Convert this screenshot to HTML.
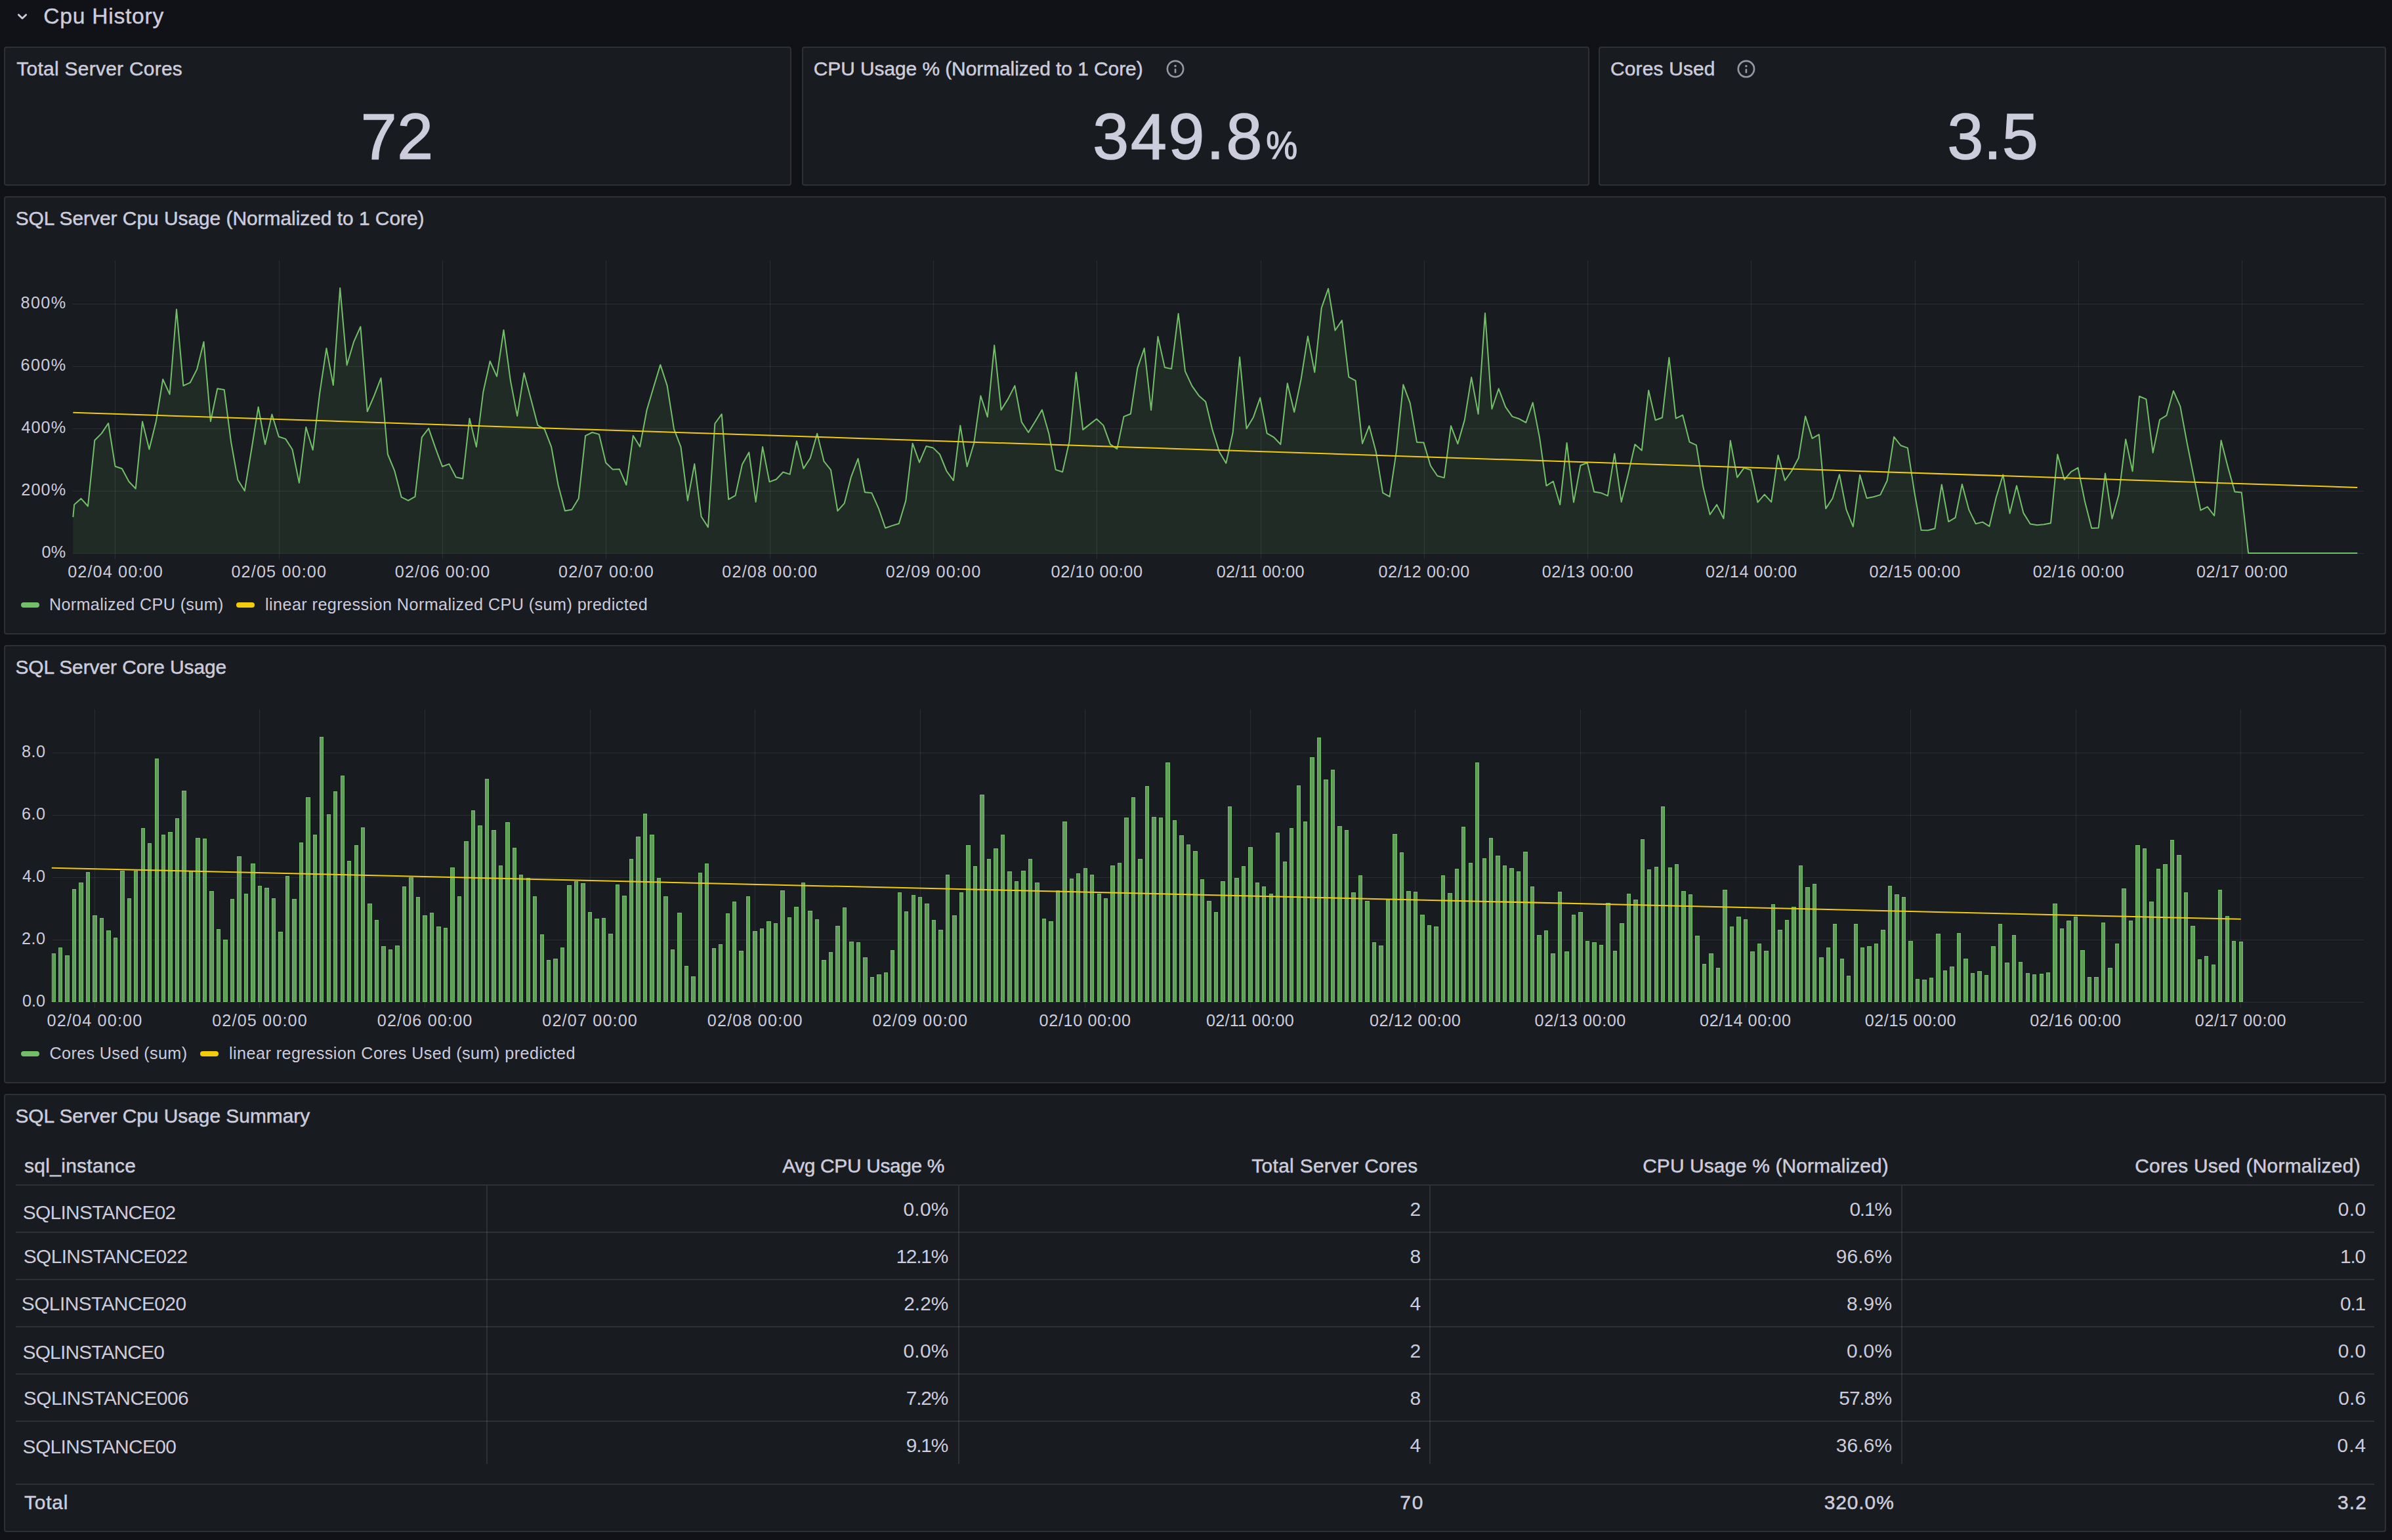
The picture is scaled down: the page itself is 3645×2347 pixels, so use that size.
<!DOCTYPE html>
<html lang="en"><head><meta charset="utf-8"><title>Cpu History</title>
<style>
html,body{margin:0;padding:0;background:#111217;}
body{width:3645px;height:2347px;position:relative;overflow:hidden;font-family:"Liberation Sans", sans-serif;color:#ccccdc;}
.panel{position:absolute;box-sizing:border-box;background:#181b1f;border:2px solid #2e3036;border-radius:4px;}
.t{position:absolute;white-space:pre;line-height:1;font-family:"Liberation Sans", sans-serif;color:#ccccdc;}
svg{position:absolute;left:0;top:0;}
.hl{position:absolute;background:rgba(204,204,220,0.12);}
.sw{position:absolute;width:28px;height:8px;border-radius:4px;}
</style></head><body>

<div class="panel" style="left:6px;top:71px;width:1200px;height:212px"></div>
<div class="panel" style="left:1222px;top:71px;width:1200px;height:212px"></div>
<div class="panel" style="left:2436px;top:71px;width:1200px;height:212px"></div>
<div class="panel" style="left:6px;top:299px;width:3630px;height:668px"></div>
<div class="panel" style="left:6px;top:983px;width:3630px;height:668px"></div>
<div class="panel" style="left:6px;top:1667px;width:3630px;height:668px"></div>
<svg width="3645" height="2347" viewBox="0 0 3645 2347" font-family='"Liberation Sans", sans-serif'>
<path d="M175.5 397V851.9 M425.5 397V851.9 M674.5 397V851.9 M923.5 397V851.9 M1173.5 397V851.9 M1422.5 397V851.9 M1671.5 397V851.9 M1921.5 397V851.9 M2170.5 397V851.9 M2419.5 397V851.9 M2668.5 397V851.9 M2918.5 397V851.9 M3167.5 397V851.9 M3416.5 397V851.9" stroke="#f0faff" stroke-opacity="0.085" stroke-width="1" fill="none" shape-rendering="crispEdges"/>
<path d="M111.3 843.5H3602.4 M111.3 748.5H3602.4 M111.3 653.5H3602.4 M111.3 558.5H3602.4 M111.3 463.5H3602.4" stroke="#f0faff" stroke-opacity="0.085" stroke-width="1" fill="none" shape-rendering="crispEdges"/>
<path d="M111.3 788.2 L113.2 768.9 L123.6 759.8 L134.0 771.5 L144.3 671.0 L154.7 660.6 L165.1 645.0 L175.5 710.7 L185.9 714.3 L196.3 733.8 L206.7 744.7 L217.0 642.4 L227.4 684.7 L237.8 642.3 L248.2 578.0 L258.6 600.9 L269.0 471.5 L279.4 587.9 L289.7 583.2 L300.1 562.9 L310.5 520.9 L320.9 642.2 L331.3 592.3 L341.7 593.9 L352.1 673.6 L362.4 731.2 L372.8 748.1 L383.2 685.5 L393.6 620.3 L404.0 677.2 L414.4 631.5 L424.8 665.5 L435.1 668.9 L445.5 685.0 L455.9 735.9 L466.3 651.0 L476.7 685.8 L487.1 599.8 L497.4 530.8 L507.8 587.1 L518.2 438.9 L528.6 556.5 L539.0 521.2 L549.4 497.8 L559.8 627.1 L570.1 603.2 L580.5 576.2 L590.9 692.5 L601.3 717.7 L611.7 757.7 L622.1 762.9 L632.5 756.9 L642.8 666.3 L653.2 652.8 L663.6 682.9 L674.0 711.0 L684.4 707.1 L694.8 727.3 L705.2 729.4 L715.5 637.7 L725.9 681.1 L736.3 597.5 L746.7 550.5 L757.1 573.6 L767.5 503.0 L777.9 580.1 L788.2 634.1 L798.6 568.4 L809.0 607.9 L819.4 648.1 L829.8 654.1 L840.2 681.1 L850.6 739.3 L860.9 778.5 L871.3 776.7 L881.7 759.8 L892.1 664.2 L902.5 659.0 L912.9 661.9 L923.2 705.3 L933.6 715.4 L944.0 715.1 L954.4 739.0 L964.8 664.0 L975.2 680.8 L985.6 625.0 L995.9 590.2 L1006.3 555.9 L1016.7 587.9 L1027.1 654.1 L1037.5 681.1 L1047.9 762.9 L1058.3 707.1 L1068.6 787.3 L1079.0 803.4 L1089.4 645.5 L1099.8 631.2 L1110.2 761.1 L1120.6 755.1 L1131.0 707.8 L1141.3 689.4 L1151.7 765.0 L1162.1 681.1 L1172.5 734.4 L1182.9 730.5 L1193.3 719.5 L1203.7 722.9 L1214.0 672.3 L1224.4 714.1 L1234.8 698.0 L1245.2 660.8 L1255.6 703.2 L1266.0 716.2 L1276.4 778.7 L1286.7 767.1 L1297.1 726.3 L1307.5 699.0 L1317.9 750.2 L1328.3 751.2 L1338.7 774.3 L1349.1 804.7 L1359.4 801.1 L1369.8 798.0 L1380.2 763.4 L1390.6 675.7 L1401.0 704.7 L1411.4 680.1 L1421.8 682.4 L1432.1 692.5 L1442.5 718.0 L1452.9 732.3 L1463.3 648.4 L1473.7 711.0 L1484.1 675.7 L1494.4 603.2 L1504.8 635.4 L1515.2 526.3 L1525.6 624.8 L1536.0 608.1 L1546.4 587.9 L1556.8 643.2 L1567.1 659.0 L1577.5 642.2 L1587.9 624.5 L1598.3 660.8 L1608.7 715.9 L1619.1 719.3 L1629.5 672.8 L1639.8 567.4 L1650.2 654.9 L1660.6 646.6 L1671.0 638.5 L1681.4 648.4 L1691.8 677.2 L1702.2 684.2 L1712.5 634.9 L1722.9 630.7 L1733.3 561.1 L1743.7 530.8 L1754.1 625.0 L1764.5 513.1 L1774.9 560.1 L1785.2 561.9 L1795.6 478.0 L1806.0 565.8 L1816.4 588.1 L1826.8 602.9 L1837.2 612.3 L1847.6 655.4 L1857.9 688.4 L1868.3 706.0 L1878.7 659.0 L1889.1 544.3 L1899.5 653.3 L1909.9 635.9 L1920.2 606.3 L1930.6 660.3 L1941.0 666.3 L1951.4 677.2 L1961.8 584.2 L1972.2 628.1 L1982.6 578.0 L1992.9 512.6 L2003.3 567.4 L2013.7 469.4 L2024.1 439.9 L2034.5 503.5 L2044.9 488.4 L2055.3 574.6 L2065.6 580.1 L2076.0 675.9 L2086.4 649.1 L2096.8 688.4 L2107.2 751.2 L2117.6 756.9 L2128.0 687.1 L2138.3 586.3 L2148.7 614.1 L2159.1 674.1 L2169.5 674.6 L2179.9 709.7 L2190.3 725.3 L2200.7 728.1 L2211.0 649.1 L2221.4 676.4 L2231.8 640.1 L2242.2 575.1 L2252.6 631.0 L2263.0 477.2 L2273.4 623.2 L2283.7 592.3 L2294.1 620.1 L2304.5 634.9 L2314.9 638.3 L2325.3 644.0 L2335.7 613.6 L2346.1 667.1 L2356.4 740.3 L2366.8 733.5 L2377.2 769.1 L2387.6 674.9 L2398.0 765.5 L2408.4 709.2 L2418.8 705.3 L2429.1 749.4 L2439.5 751.2 L2449.9 755.6 L2460.3 691.5 L2470.7 765.0 L2481.1 722.4 L2491.4 677.2 L2501.8 686.5 L2512.2 594.9 L2522.6 640.2 L2533.0 636.5 L2543.4 545.0 L2553.8 637.7 L2564.1 632.6 L2574.5 673.6 L2584.9 678.3 L2595.3 742.1 L2605.7 784.2 L2616.1 769.1 L2626.5 790.2 L2636.8 671.5 L2647.2 727.6 L2657.6 713.1 L2668.0 716.2 L2678.4 765.5 L2688.8 753.6 L2699.2 765.0 L2709.5 693.8 L2719.9 732.3 L2730.3 717.5 L2740.7 698.0 L2751.1 634.4 L2761.5 668.1 L2771.9 662.2 L2782.2 775.1 L2792.6 759.3 L2803.0 723.2 L2813.4 776.4 L2823.8 802.6 L2834.2 723.7 L2844.6 759.3 L2854.9 757.2 L2865.3 754.1 L2875.7 732.5 L2886.1 665.8 L2896.5 679.0 L2906.9 682.6 L2917.2 749.9 L2927.6 808.1 L2938.0 808.3 L2948.4 805.5 L2958.8 738.5 L2969.2 795.1 L2979.6 788.9 L2989.9 738.0 L3000.3 776.9 L3010.7 798.2 L3021.1 795.6 L3031.5 802.1 L3041.9 757.7 L3052.3 723.4 L3062.6 782.4 L3073.0 740.3 L3083.4 781.9 L3093.8 798.5 L3104.2 800.3 L3114.6 799.3 L3125.0 797.2 L3135.3 692.5 L3145.7 731.0 L3156.1 718.8 L3166.5 712.8 L3176.9 764.0 L3187.3 805.0 L3197.7 804.5 L3208.0 721.4 L3218.4 790.4 L3228.8 753.6 L3239.2 669.4 L3249.6 718.2 L3260.0 604.0 L3270.4 608.4 L3280.7 689.9 L3291.1 639.5 L3301.5 633.1 L3311.9 595.7 L3322.3 619.1 L3332.7 675.1 L3343.1 727.1 L3353.4 777.7 L3363.8 772.3 L3374.2 786.0 L3384.6 671.2 L3395.0 712.0 L3405.4 749.4 L3415.8 750.5 L3426.1 842.9 L3436.5 842.9 L3446.9 842.9 L3457.3 842.9 L3467.7 842.9 L3478.1 842.9 L3488.4 842.9 L3498.8 842.9 L3509.2 842.9 L3519.6 842.9 L3530.0 842.9 L3540.4 842.9 L3550.8 842.9 L3561.1 842.9 L3571.5 842.9 L3581.9 842.9 L3592.3 842.9 L3592.3 843.4 L111.3 843.4 Z" fill="#73BF69" fill-opacity="0.1" stroke="none"/>
<path d="M111.3 788.2 L113.2 768.9 L123.6 759.8 L134.0 771.5 L144.3 671.0 L154.7 660.6 L165.1 645.0 L175.5 710.7 L185.9 714.3 L196.3 733.8 L206.7 744.7 L217.0 642.4 L227.4 684.7 L237.8 642.3 L248.2 578.0 L258.6 600.9 L269.0 471.5 L279.4 587.9 L289.7 583.2 L300.1 562.9 L310.5 520.9 L320.9 642.2 L331.3 592.3 L341.7 593.9 L352.1 673.6 L362.4 731.2 L372.8 748.1 L383.2 685.5 L393.6 620.3 L404.0 677.2 L414.4 631.5 L424.8 665.5 L435.1 668.9 L445.5 685.0 L455.9 735.9 L466.3 651.0 L476.7 685.8 L487.1 599.8 L497.4 530.8 L507.8 587.1 L518.2 438.9 L528.6 556.5 L539.0 521.2 L549.4 497.8 L559.8 627.1 L570.1 603.2 L580.5 576.2 L590.9 692.5 L601.3 717.7 L611.7 757.7 L622.1 762.9 L632.5 756.9 L642.8 666.3 L653.2 652.8 L663.6 682.9 L674.0 711.0 L684.4 707.1 L694.8 727.3 L705.2 729.4 L715.5 637.7 L725.9 681.1 L736.3 597.5 L746.7 550.5 L757.1 573.6 L767.5 503.0 L777.9 580.1 L788.2 634.1 L798.6 568.4 L809.0 607.9 L819.4 648.1 L829.8 654.1 L840.2 681.1 L850.6 739.3 L860.9 778.5 L871.3 776.7 L881.7 759.8 L892.1 664.2 L902.5 659.0 L912.9 661.9 L923.2 705.3 L933.6 715.4 L944.0 715.1 L954.4 739.0 L964.8 664.0 L975.2 680.8 L985.6 625.0 L995.9 590.2 L1006.3 555.9 L1016.7 587.9 L1027.1 654.1 L1037.5 681.1 L1047.9 762.9 L1058.3 707.1 L1068.6 787.3 L1079.0 803.4 L1089.4 645.5 L1099.8 631.2 L1110.2 761.1 L1120.6 755.1 L1131.0 707.8 L1141.3 689.4 L1151.7 765.0 L1162.1 681.1 L1172.5 734.4 L1182.9 730.5 L1193.3 719.5 L1203.7 722.9 L1214.0 672.3 L1224.4 714.1 L1234.8 698.0 L1245.2 660.8 L1255.6 703.2 L1266.0 716.2 L1276.4 778.7 L1286.7 767.1 L1297.1 726.3 L1307.5 699.0 L1317.9 750.2 L1328.3 751.2 L1338.7 774.3 L1349.1 804.7 L1359.4 801.1 L1369.8 798.0 L1380.2 763.4 L1390.6 675.7 L1401.0 704.7 L1411.4 680.1 L1421.8 682.4 L1432.1 692.5 L1442.5 718.0 L1452.9 732.3 L1463.3 648.4 L1473.7 711.0 L1484.1 675.7 L1494.4 603.2 L1504.8 635.4 L1515.2 526.3 L1525.6 624.8 L1536.0 608.1 L1546.4 587.9 L1556.8 643.2 L1567.1 659.0 L1577.5 642.2 L1587.9 624.5 L1598.3 660.8 L1608.7 715.9 L1619.1 719.3 L1629.5 672.8 L1639.8 567.4 L1650.2 654.9 L1660.6 646.6 L1671.0 638.5 L1681.4 648.4 L1691.8 677.2 L1702.2 684.2 L1712.5 634.9 L1722.9 630.7 L1733.3 561.1 L1743.7 530.8 L1754.1 625.0 L1764.5 513.1 L1774.9 560.1 L1785.2 561.9 L1795.6 478.0 L1806.0 565.8 L1816.4 588.1 L1826.8 602.9 L1837.2 612.3 L1847.6 655.4 L1857.9 688.4 L1868.3 706.0 L1878.7 659.0 L1889.1 544.3 L1899.5 653.3 L1909.9 635.9 L1920.2 606.3 L1930.6 660.3 L1941.0 666.3 L1951.4 677.2 L1961.8 584.2 L1972.2 628.1 L1982.6 578.0 L1992.9 512.6 L2003.3 567.4 L2013.7 469.4 L2024.1 439.9 L2034.5 503.5 L2044.9 488.4 L2055.3 574.6 L2065.6 580.1 L2076.0 675.9 L2086.4 649.1 L2096.8 688.4 L2107.2 751.2 L2117.6 756.9 L2128.0 687.1 L2138.3 586.3 L2148.7 614.1 L2159.1 674.1 L2169.5 674.6 L2179.9 709.7 L2190.3 725.3 L2200.7 728.1 L2211.0 649.1 L2221.4 676.4 L2231.8 640.1 L2242.2 575.1 L2252.6 631.0 L2263.0 477.2 L2273.4 623.2 L2283.7 592.3 L2294.1 620.1 L2304.5 634.9 L2314.9 638.3 L2325.3 644.0 L2335.7 613.6 L2346.1 667.1 L2356.4 740.3 L2366.8 733.5 L2377.2 769.1 L2387.6 674.9 L2398.0 765.5 L2408.4 709.2 L2418.8 705.3 L2429.1 749.4 L2439.5 751.2 L2449.9 755.6 L2460.3 691.5 L2470.7 765.0 L2481.1 722.4 L2491.4 677.2 L2501.8 686.5 L2512.2 594.9 L2522.6 640.2 L2533.0 636.5 L2543.4 545.0 L2553.8 637.7 L2564.1 632.6 L2574.5 673.6 L2584.9 678.3 L2595.3 742.1 L2605.7 784.2 L2616.1 769.1 L2626.5 790.2 L2636.8 671.5 L2647.2 727.6 L2657.6 713.1 L2668.0 716.2 L2678.4 765.5 L2688.8 753.6 L2699.2 765.0 L2709.5 693.8 L2719.9 732.3 L2730.3 717.5 L2740.7 698.0 L2751.1 634.4 L2761.5 668.1 L2771.9 662.2 L2782.2 775.1 L2792.6 759.3 L2803.0 723.2 L2813.4 776.4 L2823.8 802.6 L2834.2 723.7 L2844.6 759.3 L2854.9 757.2 L2865.3 754.1 L2875.7 732.5 L2886.1 665.8 L2896.5 679.0 L2906.9 682.6 L2917.2 749.9 L2927.6 808.1 L2938.0 808.3 L2948.4 805.5 L2958.8 738.5 L2969.2 795.1 L2979.6 788.9 L2989.9 738.0 L3000.3 776.9 L3010.7 798.2 L3021.1 795.6 L3031.5 802.1 L3041.9 757.7 L3052.3 723.4 L3062.6 782.4 L3073.0 740.3 L3083.4 781.9 L3093.8 798.5 L3104.2 800.3 L3114.6 799.3 L3125.0 797.2 L3135.3 692.5 L3145.7 731.0 L3156.1 718.8 L3166.5 712.8 L3176.9 764.0 L3187.3 805.0 L3197.7 804.5 L3208.0 721.4 L3218.4 790.4 L3228.8 753.6 L3239.2 669.4 L3249.6 718.2 L3260.0 604.0 L3270.4 608.4 L3280.7 689.9 L3291.1 639.5 L3301.5 633.1 L3311.9 595.7 L3322.3 619.1 L3332.7 675.1 L3343.1 727.1 L3353.4 777.7 L3363.8 772.3 L3374.2 786.0 L3384.6 671.2 L3395.0 712.0 L3405.4 749.4 L3415.8 750.5 L3426.1 842.9 L3436.5 842.9 L3446.9 842.9 L3457.3 842.9 L3467.7 842.9 L3478.1 842.9 L3488.4 842.9 L3498.8 842.9 L3509.2 842.9 L3519.6 842.9 L3530.0 842.9 L3540.4 842.9 L3550.8 842.9 L3561.1 842.9 L3571.5 842.9 L3581.9 842.9 L3592.3 842.9" fill="none" stroke="#73BF69" stroke-width="2" stroke-linejoin="round"/>
<path d="M111.3 628.8 L3592.3 742.9" stroke="#F2CC0C" stroke-width="2" fill="none"/>
<path d="M144.5 1081V1535.7 M395.5 1081V1535.7 M647.5 1081V1535.7 M899.5 1081V1535.7 M1150.5 1081V1535.7 M1402.5 1081V1535.7 M1653.5 1081V1535.7 M1905.5 1081V1535.7 M2156.5 1081V1535.7 M2408.5 1081V1535.7 M2660.5 1081V1535.7 M2911.5 1081V1535.7 M3163.5 1081V1535.7 M3414.5 1081V1535.7" stroke="#f0faff" stroke-opacity="0.085" stroke-width="1" fill="none" shape-rendering="crispEdges"/>
<path d="M80 1527.5H3602.4 M80 1432.5H3602.4 M80 1337.5H3602.4 M80 1242.5H3602.4 M80 1147.5H3602.4" stroke="#f0faff" stroke-opacity="0.085" stroke-width="1" fill="none" shape-rendering="crispEdges"/>
<clipPath id="cp2"><rect x="78.8" y="1081" width="3523.6" height="446.20000000000005"/></clipPath>
<g clip-path="url(#cp2)" shape-rendering="crispEdges"><path d="M78 1453H85V1527H78zM89 1444H95V1527H89zM99 1456H106V1527H99zM110 1355H116V1527H110zM120 1345H127V1527H120zM131 1329H137V1527H131zM141 1395H148V1527H141zM152 1399H158V1527H152zM162 1418H169V1527H162zM173 1429H179V1527H173zM183 1327H190V1527H183zM194 1369H200V1527H194zM204 1327H210V1527H204zM215 1262H221V1527H215zM225 1285H231V1527H225zM236 1156H242V1527H236zM246 1272H252V1527H246zM256 1268H263V1527H256zM267 1247H273V1527H267zM277 1205H284V1527H277zM288 1327H294V1527H288zM298 1277H305V1527H298zM309 1278H315V1527H309zM319 1358H326V1527H319zM330 1416H336V1527H330zM340 1432H347V1527H340zM351 1370H357V1527H351zM361 1305H368V1527H361zM372 1362H378V1527H372zM382 1316H389V1527H382zM393 1350H399V1527H393zM403 1353H410V1527H403zM414 1369H420V1527H414zM424 1420H431V1527H424zM435 1335H441V1527H435zM445 1370H452V1527H445zM456 1284H462V1527H456zM466 1215H473V1527H466zM477 1272H483V1527H477zM487 1123H493V1527H487zM498 1241H504V1527H498zM508 1206H514V1527H508zM519 1182H525V1527H519zM529 1312H535V1527H529zM540 1288H546V1527H540zM550 1261H556V1527H550zM560 1377H567V1527H560zM571 1402H577V1527H571zM581 1442H588V1527H581zM592 1447H598V1527H592zM602 1441H609V1527H602zM613 1351H619V1527H613zM623 1337H630V1527H623zM634 1367H640V1527H634zM644 1395H651V1527H644zM655 1391H661V1527H655zM665 1412H672V1527H665zM676 1414H682V1527H676zM686 1322H693V1527H686zM697 1366H703V1527H697zM707 1282H714V1527H707zM718 1235H724V1527H718zM728 1258H735V1527H728zM739 1187H745V1527H739zM749 1265H756V1527H749zM760 1319H766V1527H760zM770 1253H777V1527H770zM781 1292H787V1527H781zM791 1333H797V1527H791zM802 1338H808V1527H802zM812 1366H818V1527H812zM823 1424H829V1527H823zM833 1463H839V1527H833zM843 1461H850V1527H843zM854 1444H860V1527H854zM864 1349H871V1527H864zM875 1343H881V1527H875zM885 1346H892V1527H885zM896 1390H902V1527H896zM906 1400H913V1527H906zM917 1399H923V1527H917zM927 1423H934V1527H927zM938 1348H944V1527H938zM948 1365H955V1527H948zM959 1309H965V1527H959zM969 1275H976V1527H969zM980 1240H986V1527H980zM990 1272H997V1527H990zM1001 1338H1007V1527H1001zM1011 1366H1018V1527H1011zM1022 1447H1028V1527H1022zM1032 1391H1039V1527H1032zM1043 1472H1049V1527H1043zM1053 1488H1060V1527H1053zM1064 1330H1070V1527H1064zM1074 1316H1080V1527H1074zM1085 1445H1091V1527H1085zM1095 1439H1101V1527H1095zM1106 1392H1112V1527H1106zM1116 1374H1122V1527H1116zM1126 1449H1133V1527H1126zM1137 1366H1143V1527H1137zM1147 1419H1154V1527H1147zM1158 1415H1164V1527H1158zM1168 1404H1175V1527H1168zM1179 1407H1185V1527H1179zM1189 1357H1196V1527H1189zM1200 1398H1206V1527H1200zM1210 1382H1217V1527H1210zM1221 1345H1227V1527H1221zM1231 1388H1238V1527H1231zM1242 1401H1248V1527H1242zM1252 1463H1259V1527H1252zM1263 1451H1269V1527H1263zM1273 1411H1280V1527H1273zM1284 1383H1290V1527H1284zM1294 1435H1301V1527H1294zM1305 1436H1311V1527H1305zM1315 1459H1322V1527H1315zM1326 1489H1332V1527H1326zM1336 1485H1343V1527H1336zM1347 1482H1353V1527H1347zM1357 1448H1363V1527H1357zM1368 1360H1374V1527H1368zM1378 1389H1384V1527H1378zM1389 1364H1395V1527H1389zM1399 1367H1405V1527H1399zM1409 1377H1416V1527H1409zM1420 1402H1426V1527H1420zM1430 1417H1437V1527H1430zM1441 1333H1447V1527H1441zM1451 1395H1458V1527H1451zM1462 1360H1468V1527H1462zM1472 1288H1479V1527H1472zM1483 1320H1489V1527H1483zM1493 1211H1500V1527H1493zM1504 1309H1510V1527H1504zM1514 1293H1521V1527H1514zM1525 1272H1531V1527H1525zM1535 1328H1542V1527H1535zM1546 1343H1552V1527H1546zM1556 1327H1563V1527H1556zM1567 1309H1573V1527H1567zM1577 1345H1584V1527H1577zM1588 1400H1594V1527H1588zM1598 1404H1605V1527H1598zM1609 1357H1615V1527H1609zM1619 1252H1626V1527H1619zM1630 1339H1636V1527H1630zM1640 1331H1646V1527H1640zM1651 1323H1657V1527H1651zM1661 1333H1667V1527H1661zM1672 1362H1678V1527H1672zM1682 1369H1688V1527H1682zM1692 1319H1699V1527H1692zM1703 1315H1709V1527H1703zM1713 1246H1720V1527H1713zM1724 1215H1730V1527H1724zM1734 1309H1741V1527H1734zM1745 1198H1751V1527H1745zM1755 1245H1762V1527H1755zM1766 1246H1772V1527H1766zM1776 1162H1783V1527H1776zM1787 1250H1793V1527H1787zM1797 1273H1804V1527H1797zM1808 1287H1814V1527H1808zM1818 1297H1825V1527H1818zM1829 1340H1835V1527H1829zM1839 1373H1846V1527H1839zM1850 1390H1856V1527H1850zM1860 1343H1867V1527H1860zM1871 1229H1877V1527H1871zM1881 1338H1888V1527H1881zM1892 1320H1898V1527H1892zM1902 1291H1909V1527H1902zM1913 1345H1919V1527H1913zM1923 1351H1929V1527H1923zM1934 1362H1940V1527H1934zM1944 1269H1950V1527H1944zM1955 1313H1961V1527H1955zM1965 1262H1971V1527H1965zM1976 1197H1982V1527H1976zM1986 1252H1992V1527H1986zM1996 1154H2003V1527H1996zM2007 1124H2013V1527H2007zM2017 1188H2024V1527H2017zM2028 1173H2034V1527H2028zM2038 1259H2045V1527H2038zM2049 1265H2055V1527H2049zM2059 1360H2066V1527H2059zM2070 1334H2076V1527H2070zM2080 1373H2087V1527H2080zM2091 1436H2097V1527H2091zM2101 1441H2108V1527H2101zM2112 1371H2118V1527H2112zM2122 1271H2129V1527H2122zM2133 1299H2139V1527H2133zM2143 1358H2150V1527H2143zM2154 1359H2160V1527H2154zM2164 1394H2171V1527H2164zM2175 1410H2181V1527H2175zM2185 1412H2192V1527H2185zM2196 1334H2202V1527H2196zM2206 1361H2213V1527H2206zM2217 1324H2223V1527H2217zM2227 1260H2233V1527H2227zM2238 1315H2244V1527H2238zM2248 1162H2254V1527H2248zM2259 1308H2265V1527H2259zM2269 1277H2275V1527H2269zM2279 1304H2286V1527H2279zM2290 1319H2296V1527H2290zM2300 1323H2307V1527H2300zM2311 1328H2317V1527H2311zM2321 1298H2328V1527H2321zM2332 1351H2338V1527H2332zM2342 1425H2349V1527H2342zM2353 1418H2359V1527H2353zM2363 1453H2370V1527H2363zM2374 1359H2380V1527H2374zM2384 1450H2391V1527H2384zM2395 1394H2401V1527H2395zM2405 1390H2412V1527H2405zM2416 1434H2422V1527H2416zM2426 1436H2433V1527H2426zM2437 1440H2443V1527H2437zM2447 1376H2454V1527H2447zM2458 1449H2464V1527H2458zM2468 1407H2475V1527H2468zM2479 1362H2485V1527H2479zM2489 1371H2496V1527H2489zM2500 1279H2506V1527H2500zM2510 1325H2516V1527H2510zM2521 1321H2527V1527H2521zM2531 1229H2537V1527H2531zM2542 1322H2548V1527H2542zM2552 1317H2558V1527H2552zM2562 1358H2569V1527H2562zM2573 1363H2579V1527H2573zM2583 1426H2590V1527H2583zM2594 1469H2600V1527H2594zM2604 1453H2611V1527H2604zM2615 1475H2621V1527H2615zM2625 1356H2632V1527H2625zM2636 1412H2642V1527H2636zM2646 1397H2653V1527H2646zM2657 1401H2663V1527H2657zM2667 1450H2674V1527H2667zM2678 1438H2684V1527H2678zM2688 1449H2695V1527H2688zM2699 1378H2705V1527H2699zM2709 1417H2716V1527H2709zM2720 1402H2726V1527H2720zM2730 1382H2737V1527H2730zM2741 1319H2747V1527H2741zM2751 1352H2758V1527H2751zM2762 1347H2768V1527H2762zM2772 1459H2779V1527H2772zM2783 1444H2789V1527H2783zM2793 1408H2799V1527H2793zM2804 1461H2810V1527H2804zM2814 1487H2820V1527H2814zM2825 1408H2831V1527H2825zM2835 1444H2841V1527H2835zM2845 1442H2852V1527H2845zM2856 1438H2862V1527H2856zM2866 1417H2873V1527H2866zM2877 1350H2883V1527H2877zM2887 1363H2894V1527H2887zM2898 1367H2904V1527H2898zM2908 1434H2915V1527H2908zM2919 1492H2925V1527H2919zM2929 1493H2936V1527H2929zM2940 1490H2946V1527H2940zM2950 1423H2957V1527H2950zM2961 1479H2967V1527H2961zM2971 1473H2978V1527H2971zM2982 1422H2988V1527H2982zM2992 1461H2999V1527H2992zM3003 1483H3009V1527H3003zM3013 1480H3020V1527H3013zM3024 1486H3030V1527H3024zM3034 1442H3041V1527H3034zM3045 1408H3051V1527H3045zM3055 1467H3062V1527H3055zM3066 1425H3072V1527H3066zM3076 1466H3082V1527H3076zM3087 1483H3093V1527H3087zM3097 1485H3103V1527H3097zM3108 1484H3114V1527H3108zM3118 1482H3124V1527H3118zM3128 1377H3135V1527H3128zM3139 1415H3145V1527H3139zM3149 1403H3156V1527H3149zM3160 1397H3166V1527H3160zM3170 1448H3177V1527H3170zM3181 1489H3187V1527H3181zM3191 1489H3198V1527H3191zM3202 1406H3208V1527H3202zM3212 1475H3219V1527H3212zM3223 1438H3229V1527H3223zM3233 1354H3240V1527H3233zM3244 1403H3250V1527H3244zM3254 1288H3261V1527H3254zM3265 1293H3271V1527H3265zM3275 1374H3282V1527H3275zM3286 1324H3292V1527H3286zM3296 1317H3303V1527H3296zM3307 1280H3313V1527H3307zM3317 1303H3324V1527H3317zM3328 1360H3334V1527H3328zM3338 1411H3345V1527H3338zM3349 1462H3355V1527H3349zM3359 1457H3365V1527H3359zM3370 1470H3376V1527H3370zM3380 1356H3386V1527H3380zM3391 1396H3397V1527H3391zM3401 1434H3407V1527H3401zM3412 1435H3418V1527H3412z" fill="#73BF69"/><path d="M79 1454H84V1526H79zM90 1445H94V1526H90zM100 1457H105V1526H100zM111 1356H115V1526H111zM121 1346H126V1526H121zM132 1330H136V1526H132zM142 1396H147V1526H142zM153 1400H157V1526H153zM163 1419H168V1526H163zM174 1430H178V1526H174zM184 1328H189V1526H184zM195 1370H199V1526H195zM205 1328H209V1526H205zM216 1263H220V1526H216zM226 1286H230V1526H226zM237 1157H241V1526H237zM247 1273H251V1526H247zM257 1269H262V1526H257zM268 1248H272V1526H268zM278 1206H283V1526H278zM289 1328H293V1526H289zM299 1278H304V1526H299zM310 1279H314V1526H310zM320 1359H325V1526H320zM331 1417H335V1526H331zM341 1433H346V1526H341zM352 1371H356V1526H352zM362 1306H367V1526H362zM373 1363H377V1526H373zM383 1317H388V1526H383zM394 1351H398V1526H394zM404 1354H409V1526H404zM415 1370H419V1526H415zM425 1421H430V1526H425zM436 1336H440V1526H436zM446 1371H451V1526H446zM457 1285H461V1526H457zM467 1216H472V1526H467zM478 1273H482V1526H478zM488 1124H492V1526H488zM499 1242H503V1526H499zM509 1207H513V1526H509zM520 1183H524V1526H520zM530 1313H534V1526H530zM541 1289H545V1526H541zM551 1262H555V1526H551zM561 1378H566V1526H561zM572 1403H576V1526H572zM582 1443H587V1526H582zM593 1448H597V1526H593zM603 1442H608V1526H603zM614 1352H618V1526H614zM624 1338H629V1526H624zM635 1368H639V1526H635zM645 1396H650V1526H645zM656 1392H660V1526H656zM666 1413H671V1526H666zM677 1415H681V1526H677zM687 1323H692V1526H687zM698 1367H702V1526H698zM708 1283H713V1526H708zM719 1236H723V1526H719zM729 1259H734V1526H729zM740 1188H744V1526H740zM750 1266H755V1526H750zM761 1320H765V1526H761zM771 1254H776V1526H771zM782 1293H786V1526H782zM792 1334H796V1526H792zM803 1339H807V1526H803zM813 1367H817V1526H813zM824 1425H828V1526H824zM834 1464H838V1526H834zM844 1462H849V1526H844zM855 1445H859V1526H855zM865 1350H870V1526H865zM876 1344H880V1526H876zM886 1347H891V1526H886zM897 1391H901V1526H897zM907 1401H912V1526H907zM918 1400H922V1526H918zM928 1424H933V1526H928zM939 1349H943V1526H939zM949 1366H954V1526H949zM960 1310H964V1526H960zM970 1276H975V1526H970zM981 1241H985V1526H981zM991 1273H996V1526H991zM1002 1339H1006V1526H1002zM1012 1367H1017V1526H1012zM1023 1448H1027V1526H1023zM1033 1392H1038V1526H1033zM1044 1473H1048V1526H1044zM1054 1489H1059V1526H1054zM1065 1331H1069V1526H1065zM1075 1317H1079V1526H1075zM1086 1446H1090V1526H1086zM1096 1440H1100V1526H1096zM1107 1393H1111V1526H1107zM1117 1375H1121V1526H1117zM1127 1450H1132V1526H1127zM1138 1367H1142V1526H1138zM1148 1420H1153V1526H1148zM1159 1416H1163V1526H1159zM1169 1405H1174V1526H1169zM1180 1408H1184V1526H1180zM1190 1358H1195V1526H1190zM1201 1399H1205V1526H1201zM1211 1383H1216V1526H1211zM1222 1346H1226V1526H1222zM1232 1389H1237V1526H1232zM1243 1402H1247V1526H1243zM1253 1464H1258V1526H1253zM1264 1452H1268V1526H1264zM1274 1412H1279V1526H1274zM1285 1384H1289V1526H1285zM1295 1436H1300V1526H1295zM1306 1437H1310V1526H1306zM1316 1460H1321V1526H1316zM1327 1490H1331V1526H1327zM1337 1486H1342V1526H1337zM1348 1483H1352V1526H1348zM1358 1449H1362V1526H1358zM1369 1361H1373V1526H1369zM1379 1390H1383V1526H1379zM1390 1365H1394V1526H1390zM1400 1368H1404V1526H1400zM1410 1378H1415V1526H1410zM1421 1403H1425V1526H1421zM1431 1418H1436V1526H1431zM1442 1334H1446V1526H1442zM1452 1396H1457V1526H1452zM1463 1361H1467V1526H1463zM1473 1289H1478V1526H1473zM1484 1321H1488V1526H1484zM1494 1212H1499V1526H1494zM1505 1310H1509V1526H1505zM1515 1294H1520V1526H1515zM1526 1273H1530V1526H1526zM1536 1329H1541V1526H1536zM1547 1344H1551V1526H1547zM1557 1328H1562V1526H1557zM1568 1310H1572V1526H1568zM1578 1346H1583V1526H1578zM1589 1401H1593V1526H1589zM1599 1405H1604V1526H1599zM1610 1358H1614V1526H1610zM1620 1253H1625V1526H1620zM1631 1340H1635V1526H1631zM1641 1332H1645V1526H1641zM1652 1324H1656V1526H1652zM1662 1334H1666V1526H1662zM1673 1363H1677V1526H1673zM1683 1370H1687V1526H1683zM1693 1320H1698V1526H1693zM1704 1316H1708V1526H1704zM1714 1247H1719V1526H1714zM1725 1216H1729V1526H1725zM1735 1310H1740V1526H1735zM1746 1199H1750V1526H1746zM1756 1246H1761V1526H1756zM1767 1247H1771V1526H1767zM1777 1163H1782V1526H1777zM1788 1251H1792V1526H1788zM1798 1274H1803V1526H1798zM1809 1288H1813V1526H1809zM1819 1298H1824V1526H1819zM1830 1341H1834V1526H1830zM1840 1374H1845V1526H1840zM1851 1391H1855V1526H1851zM1861 1344H1866V1526H1861zM1872 1230H1876V1526H1872zM1882 1339H1887V1526H1882zM1893 1321H1897V1526H1893zM1903 1292H1908V1526H1903zM1914 1346H1918V1526H1914zM1924 1352H1928V1526H1924zM1935 1363H1939V1526H1935zM1945 1270H1949V1526H1945zM1956 1314H1960V1526H1956zM1966 1263H1970V1526H1966zM1977 1198H1981V1526H1977zM1987 1253H1991V1526H1987zM1997 1155H2002V1526H1997zM2008 1125H2012V1526H2008zM2018 1189H2023V1526H2018zM2029 1174H2033V1526H2029zM2039 1260H2044V1526H2039zM2050 1266H2054V1526H2050zM2060 1361H2065V1526H2060zM2071 1335H2075V1526H2071zM2081 1374H2086V1526H2081zM2092 1437H2096V1526H2092zM2102 1442H2107V1526H2102zM2113 1372H2117V1526H2113zM2123 1272H2128V1526H2123zM2134 1300H2138V1526H2134zM2144 1359H2149V1526H2144zM2155 1360H2159V1526H2155zM2165 1395H2170V1526H2165zM2176 1411H2180V1526H2176zM2186 1413H2191V1526H2186zM2197 1335H2201V1526H2197zM2207 1362H2212V1526H2207zM2218 1325H2222V1526H2218zM2228 1261H2232V1526H2228zM2239 1316H2243V1526H2239zM2249 1163H2253V1526H2249zM2260 1309H2264V1526H2260zM2270 1278H2274V1526H2270zM2280 1305H2285V1526H2280zM2291 1320H2295V1526H2291zM2301 1324H2306V1526H2301zM2312 1329H2316V1526H2312zM2322 1299H2327V1526H2322zM2333 1352H2337V1526H2333zM2343 1426H2348V1526H2343zM2354 1419H2358V1526H2354zM2364 1454H2369V1526H2364zM2375 1360H2379V1526H2375zM2385 1451H2390V1526H2385zM2396 1395H2400V1526H2396zM2406 1391H2411V1526H2406zM2417 1435H2421V1526H2417zM2427 1437H2432V1526H2427zM2438 1441H2442V1526H2438zM2448 1377H2453V1526H2448zM2459 1450H2463V1526H2459zM2469 1408H2474V1526H2469zM2480 1363H2484V1526H2480zM2490 1372H2495V1526H2490zM2501 1280H2505V1526H2501zM2511 1326H2515V1526H2511zM2522 1322H2526V1526H2522zM2532 1230H2536V1526H2532zM2543 1323H2547V1526H2543zM2553 1318H2557V1526H2553zM2563 1359H2568V1526H2563zM2574 1364H2578V1526H2574zM2584 1427H2589V1526H2584zM2595 1470H2599V1526H2595zM2605 1454H2610V1526H2605zM2616 1476H2620V1526H2616zM2626 1357H2631V1526H2626zM2637 1413H2641V1526H2637zM2647 1398H2652V1526H2647zM2658 1402H2662V1526H2658zM2668 1451H2673V1526H2668zM2679 1439H2683V1526H2679zM2689 1450H2694V1526H2689zM2700 1379H2704V1526H2700zM2710 1418H2715V1526H2710zM2721 1403H2725V1526H2721zM2731 1383H2736V1526H2731zM2742 1320H2746V1526H2742zM2752 1353H2757V1526H2752zM2763 1348H2767V1526H2763zM2773 1460H2778V1526H2773zM2784 1445H2788V1526H2784zM2794 1409H2798V1526H2794zM2805 1462H2809V1526H2805zM2815 1488H2819V1526H2815zM2826 1409H2830V1526H2826zM2836 1445H2840V1526H2836zM2846 1443H2851V1526H2846zM2857 1439H2861V1526H2857zM2867 1418H2872V1526H2867zM2878 1351H2882V1526H2878zM2888 1364H2893V1526H2888zM2899 1368H2903V1526H2899zM2909 1435H2914V1526H2909zM2920 1493H2924V1526H2920zM2930 1494H2935V1526H2930zM2941 1491H2945V1526H2941zM2951 1424H2956V1526H2951zM2962 1480H2966V1526H2962zM2972 1474H2977V1526H2972zM2983 1423H2987V1526H2983zM2993 1462H2998V1526H2993zM3004 1484H3008V1526H3004zM3014 1481H3019V1526H3014zM3025 1487H3029V1526H3025zM3035 1443H3040V1526H3035zM3046 1409H3050V1526H3046zM3056 1468H3061V1526H3056zM3067 1426H3071V1526H3067zM3077 1467H3081V1526H3077zM3088 1484H3092V1526H3088zM3098 1486H3102V1526H3098zM3109 1485H3113V1526H3109zM3119 1483H3123V1526H3119zM3129 1378H3134V1526H3129zM3140 1416H3144V1526H3140zM3150 1404H3155V1526H3150zM3161 1398H3165V1526H3161zM3171 1449H3176V1526H3171zM3182 1490H3186V1526H3182zM3192 1490H3197V1526H3192zM3203 1407H3207V1526H3203zM3213 1476H3218V1526H3213zM3224 1439H3228V1526H3224zM3234 1355H3239V1526H3234zM3245 1404H3249V1526H3245zM3255 1289H3260V1526H3255zM3266 1294H3270V1526H3266zM3276 1375H3281V1526H3276zM3287 1325H3291V1526H3287zM3297 1318H3302V1526H3297zM3308 1281H3312V1526H3308zM3318 1304H3323V1526H3318zM3329 1361H3333V1526H3329zM3339 1412H3344V1526H3339zM3350 1463H3354V1526H3350zM3360 1458H3364V1526H3360zM3371 1471H3375V1526H3371zM3381 1357H3385V1526H3381zM3392 1397H3396V1526H3392zM3402 1435H3406V1526H3402zM3413 1436H3417V1526H3413z" fill="#619e5a"/></g>
<path d="M78.8 1322.7 L3414.7 1400.8" stroke="#F2CC0C" stroke-width="2" fill="none"/>
<g stroke="#9697a4" fill="none"><circle cx="1791" cy="105" r="12.15" stroke-width="2.7"/><path d="M1791 105.9V110.2" stroke-width="2.7" stroke-linecap="round"/></g><circle cx="1791" cy="100.6" r="1.8" fill="#9697a4"/>
<g stroke="#9697a4" fill="none"><circle cx="2660.9" cy="105.1" r="12.15" stroke-width="2.7"/><path d="M2660.9 106.0V110.3" stroke-width="2.7" stroke-linecap="round"/></g><circle cx="2660.9" cy="100.69999999999999" r="1.8" fill="#9697a4"/>
<path d="M28.3 22.4 L34 28.1 L39.7 22.4" stroke="#ccccdc" stroke-width="2.8" fill="none" stroke-linecap="round" stroke-linejoin="round"/>
</svg>
<div class="sw" style="left:32px;top:918px;background:#73BF69"></div>
<div class="sw" style="left:360px;top:918px;background:#F2CC0C"></div>
<div class="sw" style="left:32px;top:1602px;background:#73BF69"></div>
<div class="sw" style="left:305px;top:1602px;background:#F2CC0C"></div>
<div class="hl" style="left:24px;top:1805px;width:3594px;height:2px"></div>
<div class="hl" style="left:24px;top:1877px;width:3594px;height:2px"></div>
<div class="hl" style="left:24px;top:1949px;width:3594px;height:2px"></div>
<div class="hl" style="left:24px;top:2021px;width:3594px;height:2px"></div>
<div class="hl" style="left:24px;top:2093px;width:3594px;height:2px"></div>
<div class="hl" style="left:24px;top:2165px;width:3594px;height:2px"></div>
<div class="hl" style="left:24px;top:2261px;width:3594px;height:2px"></div>
<div class="hl" style="left:741px;top:1807px;width:2px;height:424px"></div>
<div class="hl" style="left:1460px;top:1807px;width:2px;height:424px"></div>
<div class="hl" style="left:2178px;top:1807px;width:2px;height:424px"></div>
<div class="hl" style="left:2897px;top:1807px;width:2px;height:424px"></div>
<span class="t" style="left:66.30px;top:7.56px;font-size:33.6px;letter-spacing:0.749px;-webkit-text-stroke:0.4px;">Cpu History</span>
<span class="t" style="left:25.35px;top:89.89px;font-size:29.9px;letter-spacing:0.290px;-webkit-text-stroke:0.5px;">Total Server Cores</span>
<span class="t" style="left:1239.75px;top:89.89px;font-size:29.9px;letter-spacing:-0.045px;-webkit-text-stroke:0.5px;">CPU Usage % (Normalized to 1 Core)</span>
<span class="t" style="left:2454.05px;top:89.89px;font-size:29.9px;letter-spacing:0.179px;-webkit-text-stroke:0.5px;">Cores Used</span>
<span class="t" style="left:23.65px;top:317.59px;font-size:29.9px;letter-spacing:-0.016px;-webkit-text-stroke:0.5px;">SQL Server Cpu Usage (Normalized to 1 Core)</span>
<span class="t" style="left:23.45px;top:1001.59px;font-size:29.9px;letter-spacing:-0.056px;-webkit-text-stroke:0.5px;">SQL Server Core Usage</span>
<span class="t" style="left:23.45px;top:1685.59px;font-size:29.9px;letter-spacing:-0.013px;-webkit-text-stroke:0.5px;">SQL Server Cpu Usage Summary</span>
<span class="t" style="left:549.70px;top:158.62px;font-size:98.5px;letter-spacing:0.819px;-webkit-text-stroke:1.6px;">72</span>
<span class="t" style="left:1665.30px;top:158.82px;font-size:98.5px;letter-spacing:2.873px;-webkit-text-stroke:1.6px;">349.8</span>
<span class="t" style="left:1929.40px;top:191.83px;font-size:59.5px;-webkit-text-stroke:1.2px;transform:scaleX(0.905);transform-origin:2.00px 0;">%</span>
<span class="t" style="left:2967.40px;top:158.82px;font-size:98.5px;letter-spacing:0.676px;-webkit-text-stroke:1.6px;">3.5</span>
<span class="t" style="left:31.50px;top:448.87px;font-size:25.2px;letter-spacing:1.392px;">800%</span>
<span class="t" style="left:31.50px;top:543.87px;font-size:25.2px;letter-spacing:1.392px;">600%</span>
<span class="t" style="left:32.40px;top:638.87px;font-size:25.2px;letter-spacing:1.092px;">400%</span>
<span class="t" style="left:32.30px;top:733.87px;font-size:25.2px;letter-spacing:1.125px;">200%</span>
<span class="t" style="left:63.60px;top:828.87px;font-size:25.2px;letter-spacing:0.092px;">0%</span>
<span class="t" style="left:103.15px;top:859.07px;font-size:25.2px;letter-spacing:1.155px;">02/04 00:00</span>
<span class="t" style="left:352.45px;top:859.07px;font-size:25.2px;letter-spacing:1.155px;">02/05 00:00</span>
<span class="t" style="left:601.76px;top:859.07px;font-size:25.2px;letter-spacing:1.155px;">02/06 00:00</span>
<span class="t" style="left:851.06px;top:859.07px;font-size:25.2px;letter-spacing:1.155px;">02/07 00:00</span>
<span class="t" style="left:1100.37px;top:859.07px;font-size:25.2px;letter-spacing:1.155px;">02/08 00:00</span>
<span class="t" style="left:1349.67px;top:859.07px;font-size:25.2px;letter-spacing:1.155px;">02/09 00:00</span>
<span class="t" style="left:1601.62px;top:859.07px;font-size:25.2px;letter-spacing:0.625px;">02/10 00:00</span>
<span class="t" style="left:1853.63px;top:859.07px;font-size:25.2px;letter-spacing:0.272px;">02/11 00:00</span>
<span class="t" style="left:2100.48px;top:859.07px;font-size:25.2px;letter-spacing:0.575px;">02/12 00:00</span>
<span class="t" style="left:2349.78px;top:859.07px;font-size:25.2px;letter-spacing:0.575px;">02/13 00:00</span>
<span class="t" style="left:2599.09px;top:859.07px;font-size:25.2px;letter-spacing:0.575px;">02/14 00:00</span>
<span class="t" style="left:2848.39px;top:859.07px;font-size:25.2px;letter-spacing:0.575px;">02/15 00:00</span>
<span class="t" style="left:3097.70px;top:859.07px;font-size:25.2px;letter-spacing:0.575px;">02/16 00:00</span>
<span class="t" style="left:3347.00px;top:859.07px;font-size:25.2px;letter-spacing:0.575px;">02/17 00:00</span>
<span class="t" style="left:33.00px;top:1132.87px;font-size:25.2px;letter-spacing:0.497px;">8.0</span>
<span class="t" style="left:33.00px;top:1227.87px;font-size:25.2px;letter-spacing:0.497px;">6.0</span>
<span class="t" style="left:34.00px;top:1322.87px;font-size:25.2px;letter-spacing:-0.003px;">4.0</span>
<span class="t" style="left:33.00px;top:1417.87px;font-size:25.2px;letter-spacing:0.497px;">2.0</span>
<span class="t" style="left:34.00px;top:1512.87px;font-size:25.2px;letter-spacing:-0.003px;">0.0</span>
<span class="t" style="left:71.60px;top:1542.67px;font-size:25.2px;letter-spacing:1.155px;">02/04 00:00</span>
<span class="t" style="left:323.16px;top:1542.67px;font-size:25.2px;letter-spacing:1.155px;">02/05 00:00</span>
<span class="t" style="left:574.72px;top:1542.67px;font-size:25.2px;letter-spacing:1.155px;">02/06 00:00</span>
<span class="t" style="left:826.28px;top:1542.67px;font-size:25.2px;letter-spacing:1.155px;">02/07 00:00</span>
<span class="t" style="left:1077.85px;top:1542.67px;font-size:25.2px;letter-spacing:1.155px;">02/08 00:00</span>
<span class="t" style="left:1329.41px;top:1542.67px;font-size:25.2px;letter-spacing:1.155px;">02/09 00:00</span>
<span class="t" style="left:1583.62px;top:1542.67px;font-size:25.2px;letter-spacing:0.625px;">02/10 00:00</span>
<span class="t" style="left:1837.88px;top:1542.67px;font-size:25.2px;letter-spacing:0.272px;">02/11 00:00</span>
<span class="t" style="left:2086.99px;top:1542.67px;font-size:25.2px;letter-spacing:0.575px;">02/12 00:00</span>
<span class="t" style="left:2338.55px;top:1542.67px;font-size:25.2px;letter-spacing:0.575px;">02/13 00:00</span>
<span class="t" style="left:2590.12px;top:1542.67px;font-size:25.2px;letter-spacing:0.575px;">02/14 00:00</span>
<span class="t" style="left:2841.68px;top:1542.67px;font-size:25.2px;letter-spacing:0.575px;">02/15 00:00</span>
<span class="t" style="left:3093.24px;top:1542.67px;font-size:25.2px;letter-spacing:0.575px;">02/16 00:00</span>
<span class="t" style="left:3344.80px;top:1542.67px;font-size:25.2px;letter-spacing:0.575px;">02/17 00:00</span>
<span class="t" style="left:74.90px;top:909.07px;font-size:25.2px;letter-spacing:0.346px;">Normalized CPU (sum)</span>
<span class="t" style="left:404.00px;top:909.07px;font-size:25.2px;letter-spacing:0.425px;">linear regression Normalized CPU (sum) predicted</span>
<span class="t" style="left:75.50px;top:1592.67px;font-size:25.2px;letter-spacing:0.350px;">Cores Used (sum)</span>
<span class="t" style="left:349.00px;top:1592.67px;font-size:25.2px;letter-spacing:0.448px;">linear regression Cores Used (sum) predicted</span>
<span class="t" style="left:37.05px;top:1761.79px;font-size:29.9px;letter-spacing:0.324px;-webkit-text-stroke:0.5px;">sql_instance</span>
<span class="t" style="left:1192.15px;top:1761.79px;font-size:29.9px;letter-spacing:-0.335px;-webkit-text-stroke:0.5px;">Avg CPU Usage %</span>
<span class="t" style="left:1907.35px;top:1761.79px;font-size:29.9px;letter-spacing:0.308px;-webkit-text-stroke:0.5px;">Total Server Cores</span>
<span class="t" style="left:2503.15px;top:1761.79px;font-size:29.9px;letter-spacing:0.108px;-webkit-text-stroke:0.5px;">CPU Usage % (Normalized)</span>
<span class="t" style="left:3253.25px;top:1761.79px;font-size:29.9px;letter-spacing:0.280px;-webkit-text-stroke:0.5px;">Cores Used (Normalized)</span>
<span class="t" style="left:34.80px;top:1833.09px;font-size:29.9px;letter-spacing:-0.712px;">SQLINSTANCE02</span>
<span class="t" style="left:35.80px;top:1899.79px;font-size:29.9px;letter-spacing:-0.644px;">SQLINSTANCE022</span>
<span class="t" style="left:32.80px;top:1972.09px;font-size:29.9px;letter-spacing:-0.567px;">SQLINSTANCE020</span>
<span class="t" style="left:34.60px;top:2046.09px;font-size:29.9px;letter-spacing:-0.829px;">SQLINSTANCE0</span>
<span class="t" style="left:35.80px;top:2115.79px;font-size:29.9px;letter-spacing:-0.513px;">SQLINSTANCE006</span>
<span class="t" style="left:34.60px;top:2189.89px;font-size:29.9px;letter-spacing:-0.637px;">SQLINSTANCE00</span>
<span class="t" style="left:1376.40px;top:1827.99px;font-size:29.9px;letter-spacing:0.283px;">0.0%</span>
<span class="t" style="left:2148.40px;top:1827.99px;font-size:29.9px;">2</span>
<span class="t" style="left:2818.44px;top:1827.99px;font-size:29.9px;letter-spacing:-1.196px;">0.1%</span>
<span class="t" style="left:3562.70px;top:1827.99px;font-size:29.9px;letter-spacing:0.436px;">0.0</span>
<span class="t" style="left:1365.41px;top:1899.99px;font-size:29.9px;letter-spacing:-1.196px;">12.1%</span>
<span class="t" style="left:2148.40px;top:1899.99px;font-size:29.9px;">8</span>
<span class="t" style="left:2797.70px;top:1899.99px;font-size:29.9px;letter-spacing:0.131px;">96.6%</span>
<span class="t" style="left:3565.96px;top:1899.99px;font-size:29.9px;letter-spacing:-1.196px;">1.0</span>
<span class="t" style="left:1377.20px;top:1971.99px;font-size:29.9px;letter-spacing:0.016px;">2.2%</span>
<span class="t" style="left:2148.40px;top:1971.99px;font-size:29.9px;">4</span>
<span class="t" style="left:2814.00px;top:1971.99px;font-size:29.9px;letter-spacing:0.283px;">8.9%</span>
<span class="t" style="left:3565.96px;top:1971.99px;font-size:29.9px;letter-spacing:-1.196px;">0.1</span>
<span class="t" style="left:1376.40px;top:2043.99px;font-size:29.9px;letter-spacing:0.283px;">0.0%</span>
<span class="t" style="left:2148.40px;top:2043.99px;font-size:29.9px;">2</span>
<span class="t" style="left:2814.00px;top:2043.99px;font-size:29.9px;letter-spacing:0.283px;">0.0%</span>
<span class="t" style="left:3562.70px;top:2043.99px;font-size:29.9px;letter-spacing:0.436px;">0.0</span>
<span class="t" style="left:1380.80px;top:2115.99px;font-size:29.9px;letter-spacing:-1.184px;">7.2%</span>
<span class="t" style="left:2148.40px;top:2115.99px;font-size:29.9px;">8</span>
<span class="t" style="left:2802.30px;top:2115.99px;font-size:29.9px;letter-spacing:-1.019px;">57.8%</span>
<span class="t" style="left:3563.20px;top:2115.99px;font-size:29.9px;letter-spacing:0.186px;">0.6</span>
<span class="t" style="left:1380.84px;top:2187.99px;font-size:29.9px;letter-spacing:-1.196px;">9.1%</span>
<span class="t" style="left:2148.40px;top:2187.99px;font-size:29.9px;">4</span>
<span class="t" style="left:2797.70px;top:2187.99px;font-size:29.9px;letter-spacing:0.131px;">36.6%</span>
<span class="t" style="left:3561.60px;top:2187.99px;font-size:29.9px;letter-spacing:0.986px;">0.4</span>
<span class="t" style="left:37.05px;top:2274.69px;font-size:29.9px;letter-spacing:0.801px;-webkit-text-stroke:0.5px;">Total</span>
<span class="t" style="left:2133.25px;top:2274.69px;font-size:29.9px;letter-spacing:1.776px;-webkit-text-stroke:0.5px;">70</span>
<span class="t" style="left:2779.65px;top:2274.69px;font-size:29.9px;letter-spacing:0.940px;-webkit-text-stroke:0.5px;">320.0%</span>
<span class="t" style="left:3561.92px;top:2274.69px;font-size:29.9px;letter-spacing:1.200px;-webkit-text-stroke:0.5px;">3.2</span>
</body></html>
